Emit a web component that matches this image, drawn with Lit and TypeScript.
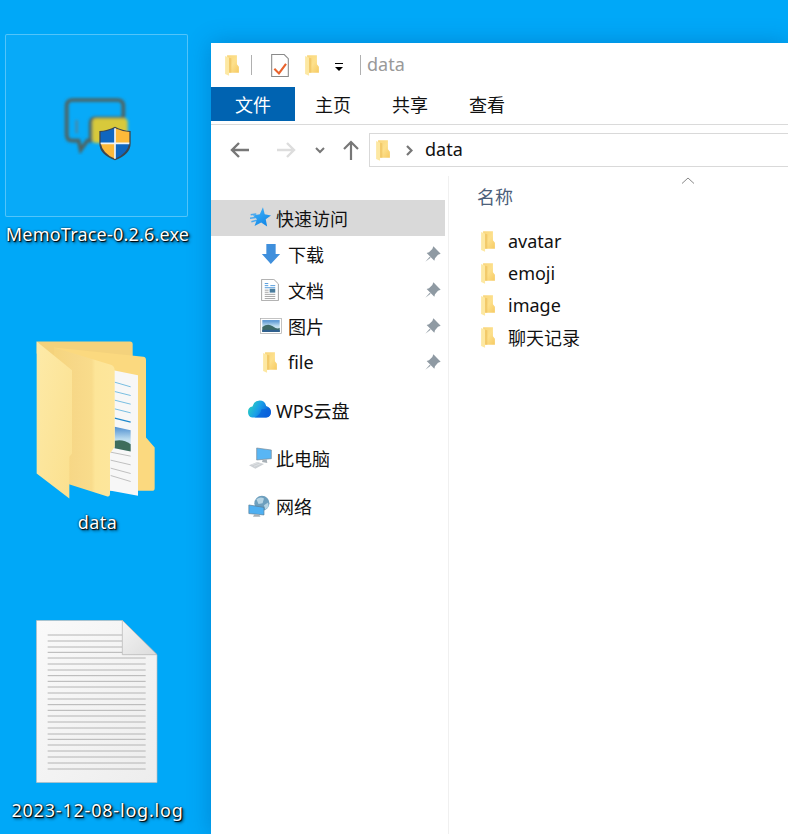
import { LitElement, html, svg, css } from 'lit';
import { customElement } from 'lit/decorators.js';

// small yellow folder, drawn in 3x crop coordinates
const folderShapes = svg`
  <path d="M102 183 H132 V210 L138 218 V236 H102 Z" fill="url(#fBack)" />
  <path d="M96 185 L108 190 V245 L96 240 Z" fill="#fde8a2" />
  <path d="M108 190 L115 192 V236 H108 Z" fill="#eec25e" opacity=".7" />
`;

const folder = () => html`<svg class="folder" viewBox="96 182 42 64">${folderShapes}</svg>`;

const pin = () => html`
  <svg class="pin" viewBox="0 0 48 48">
    <path d="M25 1 L47 23 L39 26 L30 37 L28 44 L5 21 L12 19 L22 9 Z" fill="#8f9aa3" />
    <path d="M14 32 L1 47 L17 35 Z" fill="#9aa4ac" />
  </svg>
`;

const navItems = [
  { label: '下载', icon: 'download' },
  { label: '文档', icon: 'docs' },
  { label: '图片', icon: 'pics' },
  { label: 'file', icon: 'folder' },
];

const files = ['avatar', 'emoji', 'image', '聊天记录'];

@customElement('app-root')
export class AppRoot extends LitElement {
  static styles = css`
    :host {
      display: flex;
      width: 788px;
      height: 834px;
      overflow: hidden;
      background: #00a8f8;
      font-family: 'Noto Sans', 'Noto Sans CJK SC', sans-serif;
      font-size: 18px;
      color: #111;
    }

    .defs {
      width: 0;
      height: 0;
      position: absolute;
    }

    .desktop {
      width: 211px;
      flex: none;
      display: flex;
      flex-direction: column;
      padding-top: 34px;
      box-sizing: border-box;
    }

    .desktop > * {
      flex: none;
    }

    .selected {
      box-sizing: border-box;
      width: 183px;
      height: 183px;
      margin-left: 5px;
      padding: 61px 0 0 54px;
      border: 1px solid rgba(255, 255, 255, 0.3);
      border-radius: 2px;
      background: rgba(255, 255, 255, 0.03);
    }

    .exe {
      display: block;
      width: 75px;
      height: 68px;
    }

    .label {
      width: 195px;
      color: #fff;
      line-height: 24px;
      height: 24px;
      text-align: center;
      white-space: nowrap;
      text-shadow: 1px 1px 1px #000, 2px 2px 3px rgba(0, 0, 0, 0.6), 0 0 2px rgba(0, 0, 0, 0.9);
    }

    .exe-label {
      margin-top: 5px;
      letter-spacing: 0.2px;
    }

    .big-folder {
      display: block;
      width: 130px;
      height: 167px;
      margin: 94px 0 0 30px;
    }

    .data-label {
      margin-top: 3px;
      letter-spacing: 0.4px;
    }

    .big-doc {
      display: block;
      width: 130px;
      height: 170px;
      margin: 84px 0 0 33px;
    }

    .log-label {
      margin-top: 10px;
      letter-spacing: 0.8px;
    }

    .window {
      flex: 1;
      margin-top: 43px;
      background: #fff;
      box-shadow: 0 0 22px rgba(0, 60, 130, 0.3);
      display: flex;
      flex-direction: column;
      min-width: 0;
    }

    .title {
      height: 44px;
      display: flex;
      align-items: center;
      flex: none;
      padding-left: 14px;
      color: #999;
    }

    .title-text {
      margin-left: 6px;
      padding-bottom: 2px;
    }

    .title-folder {
      display: block;
      margin-left: 16px;
    }

    .folder {
      display: block;
      width: 14px;
      height: 21px;
      flex: none;
    }

    .sep {
      width: 1px;
      height: 20px;
      background: #b0b0b0;
      flex: none;
    }

    .tabs {
      height: 34px;
      display: flex;
      flex: none;
    }

    .tab {
      padding: 0 21px 0 20px;
      line-height: 36px;
    }

    .tab.active {
      width: 84px;
      box-sizing: border-box;
      padding: 0;
      text-align: center;
      background: #0063b1;
      color: #fff;
    }

    .ribbon-line {
      height: 1px;
      margin-top: 3px;
      background: #dadada;
      flex: none;
    }

    .address-row {
      display: flex;
      align-items: center;
      height: 34px;
      margin-top: 8px;
      flex: none;
    }

    .address {
      flex: 1;
      height: 34px;
      box-sizing: border-box;
      margin-left: 10px;
      border: 1px solid #d9d9d9;
      border-right: none;
      display: flex;
      align-items: center;
      padding-left: 6px;
    }

    .address span {
      margin-left: 12px;
      line-height: 30px;
      padding-bottom: 2px;
    }

    .body {
      flex: 1;
      display: flex;
      margin-top: 9px;
      min-height: 0;
    }

    .nav {
      width: 234px;
      padding-top: 24px;
      flex: none;
    }

    .nav-row {
      height: 36px;
      display: flex;
      align-items: center;
      position: relative;
    }

    .nav-row.active {
      background: #d9d9d9;
    }

    .top {
      padding-left: 65px;
    }

    .sub {
      padding-left: 77px;
    }

    .gap {
      margin-top: 12px;
    }

    .nav-icon {
      position: absolute;
      display: block;
    }

    .pin {
      width: 16px;
      height: 16px;
      margin-left: auto;
      margin-right: 4px;
      display: block;
    }

    .divider {
      width: 1px;
      margin-left: 3px;
      background: #f0f0f0;
      flex: none;
    }

    .content {
      flex: 1;
      padding: 8px 0 0 28px;
      position: relative;
    }

    .sort {
      position: absolute;
      left: 232px;
      top: 1px;
      width: 14px;
      height: 7px;
    }

    .head {
      height: 26px;
      line-height: 26px;
      color: #4c607a;
    }

    .list {
      margin-top: 15px;
    }

    .file {
      height: 32px;
      display: flex;
      align-items: center;
      padding-left: 4px;
    }

    .file span {
      margin-left: 13px;
    }
  `;

  navIcon(name: string) {
    if (name === 'download') {
      return html`<svg class="nav-icon" style="left:50px;top:8px" width="20" height="20" viewBox="52 117 53 58">
        <path d="M65 117 H92 V146 H105 L78 175 L52 146 H65 Z" fill="#3f8fdc" />
      </svg>`;
    }
    if (name === 'docs') {
      return html`<svg class="nav-icon" style="left:50px;top:7px" width="18" height="22" viewBox="52 224 50 63">
        <path d="M53 225 H88 L101 238 V286 H53 Z" fill="#fff" stroke="#999" stroke-width="2.5" />
        <path d="M62 237 H72 M62 243 H72 M62 249 H92 M78 243 H92" stroke="#3f90d8" stroke-width="2.5" />
        <rect x="76" y="252" width="16" height="11" fill="#4a7d9e" />
        <path d="M62 256 H73 M62 262 H73 M62 268 H92 M62 274 H92 M62 280 H92" stroke="#9a9a9a" stroke-width="2.5" />
      </svg>`;
    }
    if (name === 'pics') {
      return html`<svg class="nav-icon" style="left:49px;top:10px" width="22" height="16" viewBox="46 340 62 46">
        <rect x="47" y="341" width="60" height="44" fill="#fff" stroke="#aaa" stroke-width="2" />
        <rect x="52" y="346" width="50" height="34" fill="url(#sky)" />
        <path d="M52 366 Q68 354 82 364 T102 368 V380 H52 Z" fill="#3d6a68" />
        <rect x="52" y="374" width="50" height="6" fill="#2f5f90" />
      </svg>`;
    }
    return html`<svg class="nav-icon folder" style="left:52px;top:8px" viewBox="96 182 42 64">${folderShapes}</svg>`;
  }

  render() {
    return html`
      <svg class="defs">
        <defs>
          <linearGradient id="fBack" x1="0" y1="0" x2="1" y2="1">
            <stop offset="0" stop-color="#f9d67c" />
            <stop offset="0.5" stop-color="#fde08c" />
            <stop offset="1" stop-color="#f6ca62" />
          </linearGradient>
          <linearGradient id="sky" x1="0" y1="0" x2="0" y2="1">
            <stop offset="0" stop-color="#4f8fd0" />
            <stop offset="0.5" stop-color="#bcdcef" />
            <stop offset="1" stop-color="#e4f0f5" />
          </linearGradient>
          <linearGradient id="paper" x1="0" y1="0" x2="1" y2="1">
            <stop offset="0" stop-color="#fafafa" />
            <stop offset="1" stop-color="#ededed" />
          </linearGradient>
          <linearGradient id="fold" x1="0" y1="0" x2="1" y2="1">
            <stop offset="0" stop-color="#f4f4f4" />
            <stop offset="1" stop-color="#dcdcdc" />
          </linearGradient>
          <linearGradient id="flap" x1="0" y1="0" x2="1" y2="0">
            <stop offset="0" stop-color="#f6d57e" />
            <stop offset="0.35" stop-color="#f7d888" />
            <stop offset="0.62" stop-color="#f9dc8c" />
            <stop offset="0.68" stop-color="#fde598" />
            <stop offset="1" stop-color="#fde69c" />
          </linearGradient>
          <linearGradient id="leftFlap" x1="0" y1="0" x2="1" y2="1">
            <stop offset="0" stop-color="#fdeaa8" />
            <stop offset="1" stop-color="#fbe08e" />
          </linearGradient>
          <linearGradient id="cloud" x1="0" y1="0" x2="1" y2="0.4">
            <stop offset="0" stop-color="#2fdcb4" />
            <stop offset="0.55" stop-color="#1aa0e8" />
            <stop offset="1" stop-color="#0a62dc" />
          </linearGradient>
          <linearGradient id="star" x1="0" y1="0" x2="0.6" y2="1">
            <stop offset="0" stop-color="#45b4f8" />
            <stop offset="1" stop-color="#1288e8" />
          </linearGradient>
          <filter id="blur"><feGaussianBlur stdDeviation="4.5" /></filter>
        </defs>
      </svg>

      <div class="desktop">
        <div class="selected">
          <svg class="exe" viewBox="180 228 225 204">
            <g filter="url(#blur)">
              <path d="M218 240 H352 Q370 240 370 258 V295 H285 Q272 295 272 310 V362 H262 L242 390 L236 362 H218 Q200 362 200 344 V258 Q200 240 218 240 Z" fill="none" stroke="#4f625f" stroke-width="11" />
              <path d="M230 300 V340" stroke="#5b8090" stroke-width="6" />
              <rect x="277" y="295" width="106" height="74" rx="12" fill="#d8c93a" />
            </g>
            <path d="M345 320 Q368 332 392 333 V370 Q392 404 345 421 Q298 404 298 370 V333 Q322 332 345 320 Z" fill="#3d4650" />
            <path d="M345 325 V369 H302 V336 Q325 334 345 325 Z" fill="#0f66c0" />
            <path d="M345 325 Q365 334 388 336 V369 H345 Z" fill="#fdb93a" />
            <path d="M302 369 H345 V416 Q308 402 302 369 Z" fill="#fdb93a" />
            <path d="M345 369 H388 Q382 402 345 416 Z" fill="#0f66c0" />
            <path d="M345 325 V416 M302 370 H388" stroke="#eef4fa" stroke-width="5" />
          </svg>
        </div>
        <div class="label exe-label">MemoTrace-0.2.6.exe</div>

        <svg class="big-folder" viewBox="90 60 390 500">
          <path d="M110 64 H390 Q398 64 398 72 V120 H160 L110 100 Z" fill="#f4d27c" />
          <path d="M162 82 L430 110 Q438 111 438 120 V352 L464 382 V504 Q464 512 456 512 H300 V300 L162 120 Z" fill="#fbd97f" />
          <path d="M340 150 L414 165 V527 L325 510 V400 Z" fill="#f7f7f7" />
          <path d="M344 186 L392 200 M344 214 L392 226 M344 240 L392 252 M344 266 L392 278" stroke="#5fb2dc" stroke-width="2.5" />
          <path d="M344 294 L392 306" stroke="#1f88cc" stroke-width="4" />
          <path d="M344 320 L392 330 V394 L344 384 Z" fill="url(#sky)" />
          <path d="M344 362 Q370 356 392 372 V394 L344 384 Z" fill="#3e6c5c" />
          <path d="M332 396 L392 408 M332 420 L392 434 M332 444 L392 460 M332 466 L392 484" stroke="#b4b4b4" stroke-width="2.5" />
          <path d="M162 82 L330 133 Q344 137 344 150 V380 L330 400 V520 Q330 531 320 528 L162 478 Z" fill="url(#flap)" />
          <path d="M110 64 L216 150 V400 L208 410 V535 L110 460 Z" fill="url(#leftFlap)" />
        </svg>
        <div class="label data-label">data</div>

        <svg class="big-doc" viewBox="100 55 390 510">
          <path d="M110.5 62.5 H368 L472 165 V548.5 H110.5 Z" fill="url(#paper)" stroke="#bcbcbc" stroke-width="2" />
          <path d="M144 106 H368 M144 124 H368 M144 142 H368 M144 158 H368" stroke="#b4b4b4" stroke-width="3" />
          <path d="M144 175 H438 M144 193 H438 M144 211 H438 M144 228 H438 M144 245 H438 M144 262 H438 M144 280 H438 M144 298 H438 M144 315 H438 M144 332 H438 M144 349 H438 M144 367 H438 M144 385 H438 M144 403 H438 M144 419 H438 M144 436 H438 M144 454 H438 M144 472 H438 M144 490 H438 M144 508 H438" stroke="#b4b4b4" stroke-width="3" />
          <path d="M368 62 V165 H472 Z" fill="url(#fold)" stroke="#b0b0b0" stroke-width="2" />
        </svg>
        <div class="label log-label">2023-12-08-log.log</div>
      </div>

      <div class="window">
        <div class="title">
          ${folder()}
          <div class="sep" style="margin-left:12px"></div>
          <svg width="18" height="23" viewBox="153 30 50 65" style="margin-left:19px;flex:none">
            <path d="M154.5 31.5 H190 L201.5 43 V93.5 H154.5 Z" fill="#fff" stroke="#8a8a8a" stroke-width="3" />
            <path d="M162 72 L175 85 L195 58" fill="none" stroke="#e8622c" stroke-width="6" />
          </svg>
          <span class="title-folder">${folder()}</span>
          <svg width="10" height="9" viewBox="0 0 10 9" style="margin-left:15px;flex:none;margin-top:5px">
            <path d="M1 .5 H9" stroke="#000" stroke-width="1" />
            <path d="M1 4 H9 L5 8 Z" fill="#000" />
          </svg>
          <div class="sep" style="margin-left:16px"></div>
          <span class="title-text">data</span>
        </div>

        <div class="tabs">
          <div class="tab active">文件</div>
          <div class="tab">主页</div>
          <div class="tab">共享</div>
          <div class="tab">查看</div>
        </div>
        <div class="ribbon-line"></div>

        <div class="address-row">
          <svg width="20" height="16" viewBox="0 0 20 16" style="margin-left:19px;flex:none">
            <path d="M19 8 H2 M9 1 L2 8 L9 15" fill="none" stroke="#777" stroke-width="2.4" />
          </svg>
          <svg width="20" height="16" viewBox="0 0 20 16" style="margin-left:26px;flex:none">
            <path d="M1 8 H18 M11 1 L18 8 L11 15" fill="none" stroke="#ddd" stroke-width="2.4" />
          </svg>
          <svg width="10" height="7" viewBox="0 0 10 7" style="margin-left:19px;flex:none">
            <path d="M1 1 L5 5 L9 1" fill="none" stroke="#777" stroke-width="2" />
          </svg>
          <svg width="16" height="20" viewBox="0 0 16 20" style="margin-left:18px;flex:none">
            <path d="M8 20 V2 M1 9 L8 2 L15 9" fill="none" stroke="#777" stroke-width="2.2" />
          </svg>
          <div class="address">
            ${folder()}
            <svg width="7" height="11" viewBox="0 0 7 11" style="margin-left:16px;flex:none">
              <path d="M1 1 L5.5 5.5 L1 10" fill="none" stroke="#777" stroke-width="2.2" />
            </svg>
            <span>data</span>
          </div>
        </div>

        <div class="body">
          <div class="nav">
            <div class="nav-row active top">
              <svg class="nav-icon" style="left:39px;top:7px" width="21" height="21" viewBox="18 12 60 60">
                <path d="M20 34 L36 32 M18 44 L34 42 M22 54 L38 50" stroke="#4aa8ee" stroke-width="4" />
                <path d="M55 13 L60 33 L78 36 L63 47 L67 68 L50 56 L31 66 L38 47 L26 36 L46 33 Z" fill="url(#star)" />
              </svg>
              快速访问
            </div>
            ${navItems.map(
              (item) => html`
                <div class="nav-row sub">
                  ${this.navIcon(item.icon)}
                  ${item.label}
                  ${pin()}
                </div>
              `
            )}
            <div class="nav-row top gap">
              <svg class="nav-icon" style="left:37px;top:8px" width="23" height="18" viewBox="113 50 67 50">
                <path d="M125 100 Q113 98 113 84 Q113 70 126 68 Q130 50 147 50 Q162 50 166 66 Q180 70 180 84 Q180 98 166 100 Z" fill="url(#cloud)" />
                <path d="M132 100 Q150 92 152 76 Q166 76 172 72 Q180 76 180 84 Q180 98 166 100 Z" fill="#0a62dc" opacity=".7" />
              </svg>
              WPS云盘
            </div>
            <div class="nav-row top gap">
              <svg class="nav-icon" style="left:37px;top:7px" width="24" height="22" viewBox="22 158 72 64">
                <path d="M48 160 L92 166 V192 L48 196 Z" fill="#58b6f5" stroke="#7a8a96" stroke-width="2" />
                <path d="M66 195 L64 202 L80 205 L78 194 Z" fill="#a8b0b6" />
                <path d="M25 212 L50 202 L70 208 L44 222 Z" fill="#ccd0d4" />
                <path d="M33 211 L52 204 M40 215 L60 207" stroke="#eef0f2" stroke-width="1.5" />
              </svg>
              此电脑
            </div>
            <div class="nav-row top gap">
              <svg class="nav-icon" style="left:37px;top:7px" width="23" height="22" viewBox="26 296 66 64">
                <circle cx="66" cy="320" r="22" fill="#6d9fbe" />
                <path d="M50 308 Q62 300 72 306 L68 320 L56 322 Z M72 326 L84 318 L86 330 L76 338 Z" fill="#b6d4e4" />
                <path d="M28 325 L72 332 V354 L28 350 Z" fill="#4fb0f2" stroke="#5a7f98" stroke-width="2" />
                <path d="M44 352 L40 359 H62 L58 353 Z" fill="#a8b0b6" />
              </svg>
              网络
            </div>
          </div>
          <div class="divider"></div>
          <div class="content">
            <svg class="sort" viewBox="0 0 14 7">
              <path d="M1 6.5 L7 1 L13 6.5" fill="none" stroke="#888" stroke-width="1" />
            </svg>
            <div class="head">名称</div>
            <div class="list">
              ${files.map((name) => html`<div class="file">${folder()}<span>${name}</span></div>`)}
            </div>
          </div>
        </div>
      </div>
    `;
  }
}
